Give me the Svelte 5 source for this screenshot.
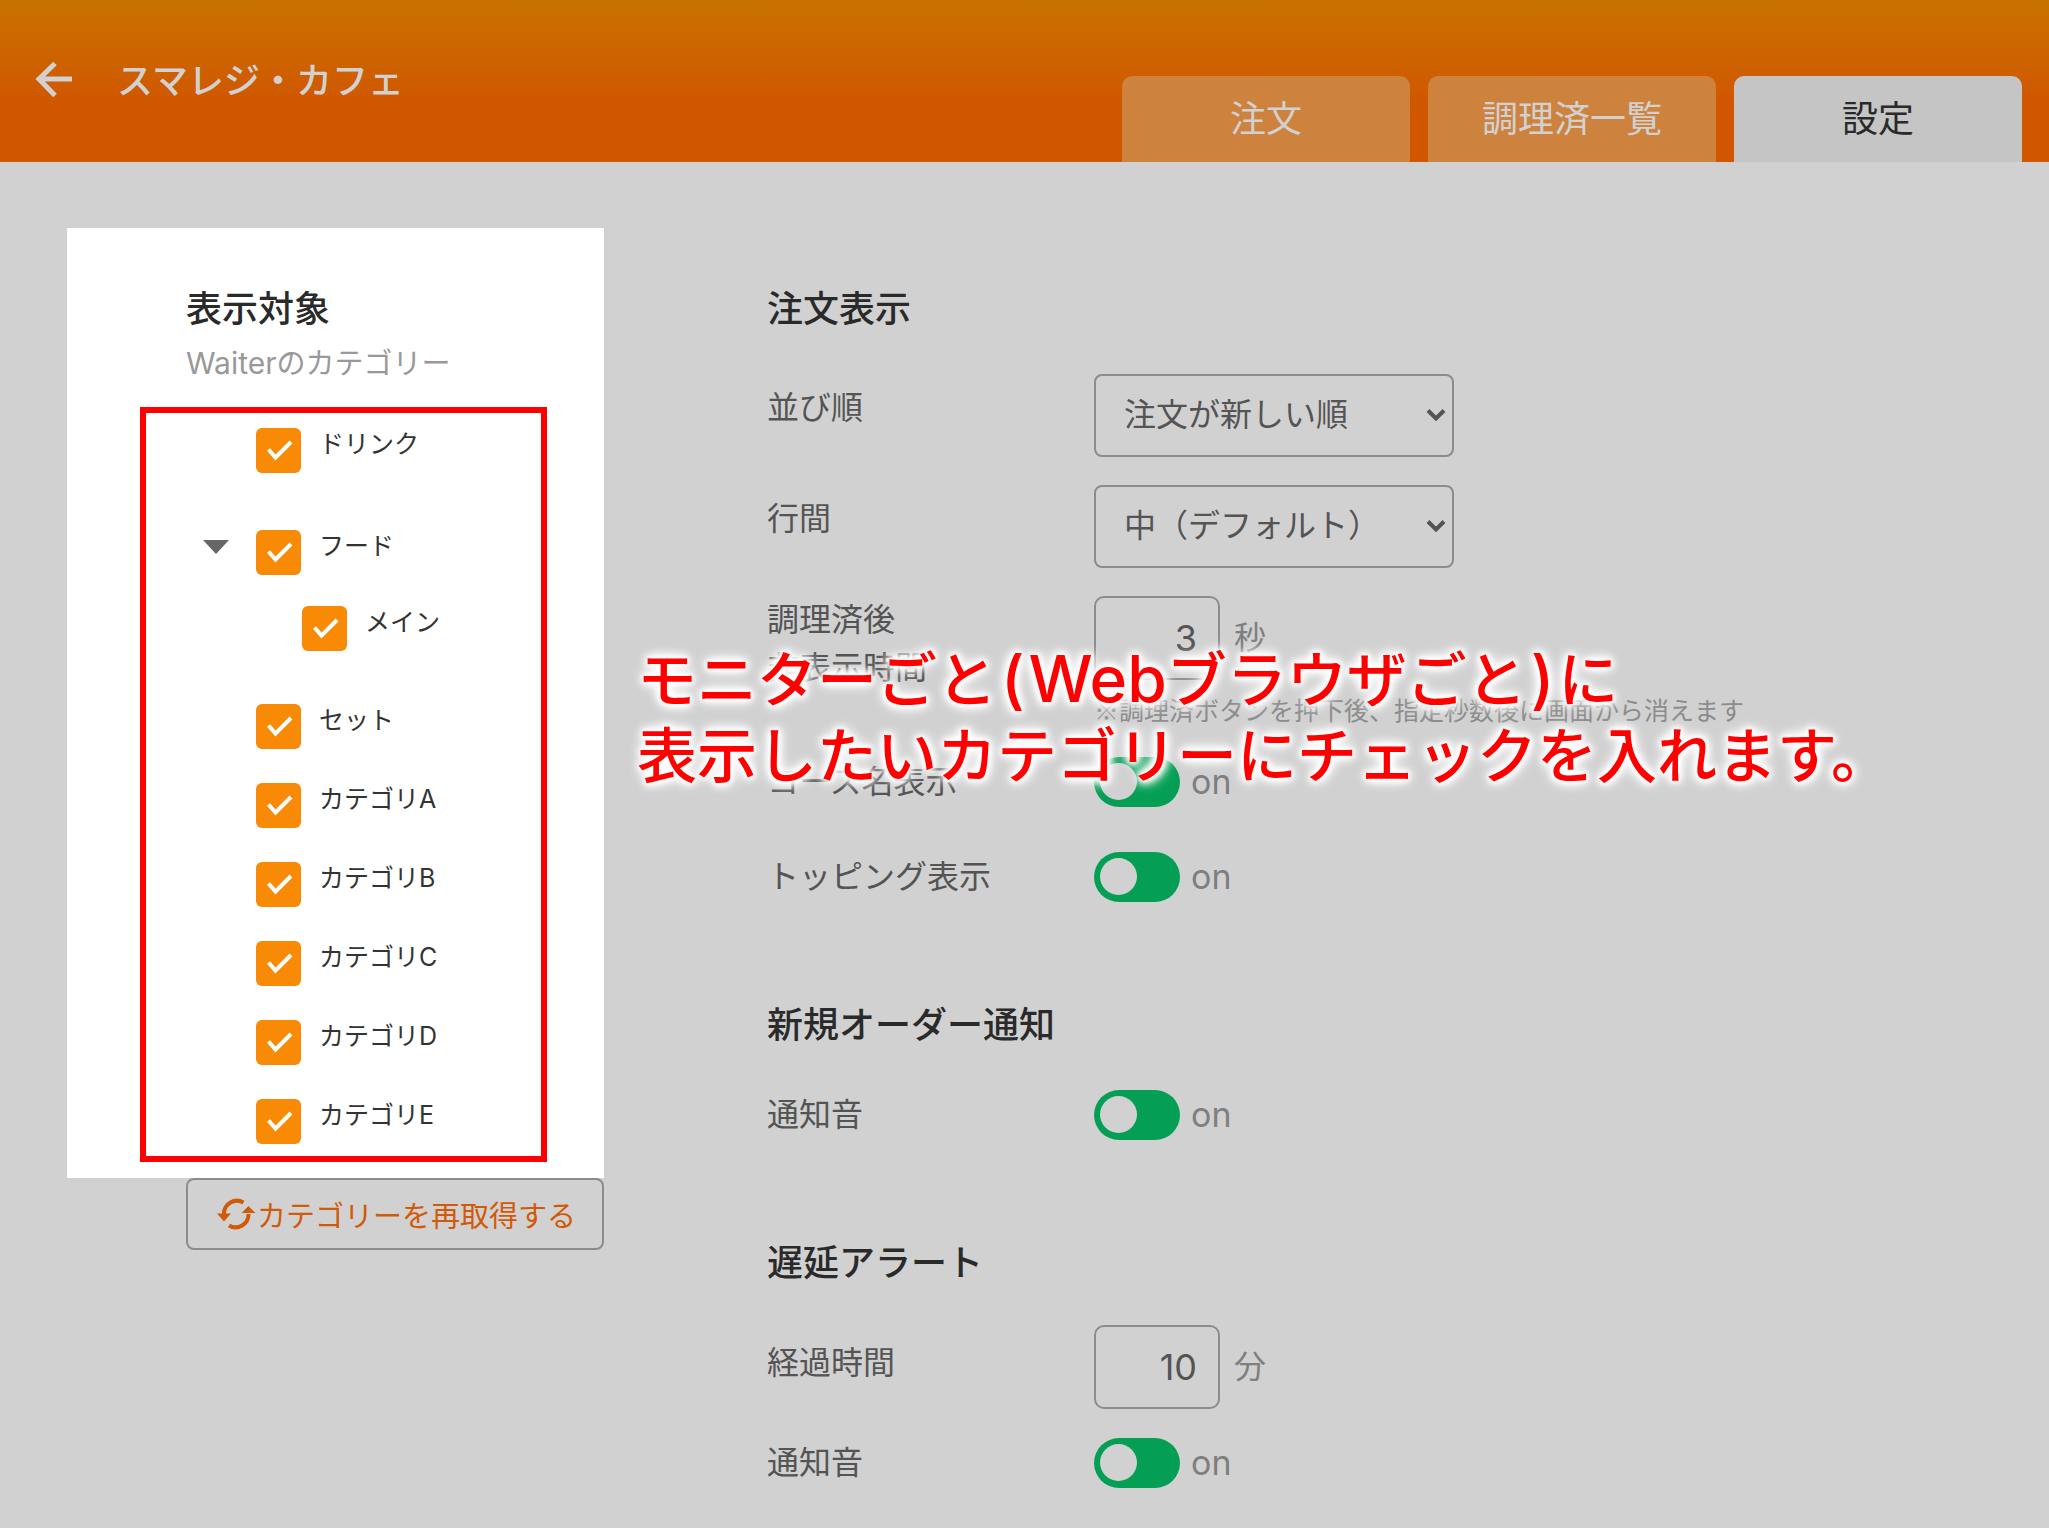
<script>
  const tabs = [
    { label: '注文', active: false },
    { label: '調理済一覧', active: false },
    { label: '設定', active: true },
  ];

  let categories = $state([
    { id: 'drink', label: 'ドリンク', checked: true, spaced: true },
    {
      id: 'food',
      label: 'フード',
      checked: true,
      spaced: true,
      children: [{ id: 'main', label: 'メイン', checked: true }],
    },
    { id: 'set', label: 'セット', checked: true },
    { id: 'a', label: 'カテゴリA', checked: true },
    { id: 'b', label: 'カテゴリB', checked: true },
    { id: 'c', label: 'カテゴリC', checked: true },
    { id: 'd', label: 'カテゴリD', checked: true },
    { id: 'e', label: 'カテゴリE', checked: true },
  ]);

  let course = $state(true);
  let topping = $state(true);
  let orderSound = $state(true);
  let delaySound = $state(true);
</script>

{#snippet checkbox(item)}
  <label class="check">
    <input type="checkbox" bind:checked={item.checked} />
    <svg class="box" viewBox="0 0 45 45" aria-hidden="true">
      <rect width="45" height="45" rx="6" />
      {#if item.checked}<path d="M12.5 21.5 L19.5 29.5 L35 14" />{/if}
    </svg>
    <span>{item.label}</span>
  </label>
{/snippet}

{#snippet chevron()}
  <svg class="chevron" viewBox="0 0 20 14" aria-hidden="true"><path d="M2 2.5 L10 10.5 L18 2.5" /></svg>
{/snippet}

<div class="page">
  <header>
    <button class="back" aria-label="戻る">
      <svg viewBox="0 0 40 40" aria-hidden="true"><path d="M38 18 H5 M21 2.500 L5 18 L21 34.500" /></svg>
    </button>
    <h1>スマレジ・カフェ</h1>
    <nav>
      {#each tabs as tab}
        <a href="#top" class:active={tab.active}>{tab.label}</a>
      {/each}
    </nav>
  </header>

  <main>
    <aside>
      <section class="card">
        <h2>表示対象</h2>
        <p class="sub"><span class="latin">Waiter</span>のカテゴリー</p>
        <ul class="tree">
          {#each categories as cat (cat.id)}
            <li class:spaced={cat.spaced}>
              <div class="row">
                {#if cat.children}
                  <button class="fold" aria-label="折りたたむ">
                    <svg viewBox="0 0 26 14" aria-hidden="true"><path d="M0 0 H26 L13 14 Z" /></svg>
                  </button>
                {/if}
                {@render checkbox(cat)}
              </div>
              {#if cat.children}
                <ul class="sublist">
                  {#each cat.children as child (child.id)}
                    <li class="row">{@render checkbox(child)}</li>
                  {/each}
                </ul>
              {/if}
            </li>
          {/each}
        </ul>
      </section>
      <button class="reload">
        <svg viewBox="0 0 38 32" aria-hidden="true">
          <path class="arc" d="M26.500 4.500 A13 13 0 0 0 7 16 M12 27.500 A13 13 0 0 0 31.500 16" />
          <path d="M0 15.500 H14 L7 23.500 Z M24.500 15 H38.500 L31.500 8 Z" />
        </svg>
        <span>カテゴリーを再取得する</span>
      </button>
    </aside>

    <div class="settings">
      <section>
        <h2>注文表示</h2>
        <div class="field first">
          <label for="order">並び順</label>
          <div class="select">
            <select id="order"><option>注文が新しい順</option></select>
            {@render chevron()}
          </div>
        </div>
        <div class="field second">
          <label for="spacing">行間</label>
          <div class="select">
            <select id="spacing"><option>中（デフォルト）</option></select>
            {@render chevron()}
          </div>
        </div>
        <div class="field third">
          <label for="seconds">調理済後<br />非表示時間</label>
          <div>
            <div class="amount"><input id="seconds" type="text" inputmode="numeric" value="3" /><span>秒</span></div>
            <p class="note">※調理済ボタンを押下後、指定秒数後に画面から消えます</p>
          </div>
        </div>
        <div class="field switch">
          <label for="course">コース名表示</label>
          <div class="toggle"><input id="course" type="checkbox" role="switch" bind:checked={course} /><span>{course ? 'on' : 'off'}</span></div>
        </div>
        <div class="field switch">
          <label for="topping">トッピング表示</label>
          <div class="toggle"><input id="topping" type="checkbox" role="switch" bind:checked={topping} /><span>{topping ? 'on' : 'off'}</span></div>
        </div>
      </section>

      <section>
        <h2>新規オーダー通知</h2>
        <div class="field switch">
          <label for="order-sound">通知音</label>
          <div class="toggle"><input id="order-sound" type="checkbox" role="switch" bind:checked={orderSound} /><span>{orderSound ? 'on' : 'off'}</span></div>
        </div>
      </section>

      <section>
        <h2>遅延アラート</h2>
        <div class="field delay">
          <label for="minutes">経過時間</label>
          <div class="amount"><input id="minutes" type="text" inputmode="numeric" value="10" /><span>分</span></div>
        </div>
        <div class="field switch">
          <label for="delay-sound">通知音</label>
          <div class="toggle"><input id="delay-sound" type="checkbox" role="switch" bind:checked={delaySound} /><span>{delaySound ? 'on' : 'off'}</span></div>
        </div>
      </section>
    </div>
  </main>

  <p class="callout">モニターごと<span class="paren">(</span><span class="latin">Web</span>ブラウザごと<span class="paren">)</span>に<br />表示したいカテゴリーにチェックを入れます。</p>
</div>

<style>
  :global(body) {
    background: #d1d1d1;
  }

  .page {
    position: relative;
    min-height: 100vh;
    box-sizing: border-box;
    font-family: Inter, 'Noto Sans CJK JP', sans-serif;
    color: #545454;
  }

  .page :is(button, input, select) {
    font-family: inherit;
    margin: 0;
    padding: 0;
    background: none;
    border: 0;
    color: inherit;
    box-sizing: border-box;
  }

  h1,
  h2,
  p,
  ul {
    margin: 0;
    padding: 0;
    list-style: none;
  }

  svg {
    display: block;
    fill: none;
  }

  header {
    height: 162px;
    display: flex;
    align-items: center;
    padding: 0 27px 0 34px;
    box-sizing: border-box;
    background: linear-gradient(#c87200, #d15600 66%, #d15600);
  }

  .back svg {
    width: 40px;
    height: 40px;
    stroke: #d1d1d1;
    stroke-width: 5;
  }

  h1 {
    margin-left: 43px;
    font-size: 36px;
    line-height: 54px;
    font-weight: 500;
    color: #d1d1d1;
  }

  nav {
    margin-left: auto;
    align-self: flex-end;
    display: flex;
    gap: 18px;
  }

  nav a {
    width: 288px;
    height: 86px;
    border-radius: 10px 10px 0 0;
    background: #cd823e;
    color: #d1d1d1;
    font-size: 36px;
    line-height: 86px;
    text-align: center;
    text-decoration: none;
  }

  nav a.active {
    background: #c5c5c5;
    color: #2a2a2a;
  }

  main {
    display: flex;
    gap: 163px;
    padding: 66px 67px 0;
  }

  aside {
    width: 537px;
    flex: none;
  }

  .card {
    background: #fff;
    padding: 54px 57px 16px 73px;
  }

  h2 {
    font-size: 36px;
    line-height: 54px;
    font-weight: 500;
    color: #2a2a2a;
  }

  .card h2,
  .sub {
    margin-left: 46px;
  }

  .sub {
    font-size: 29px;
    line-height: 54px;
    color: #999;
  }

  .sub .latin {
    font-size: 30px;
  }

  .tree {
    margin-top: 16px;
    border: 6px solid #f00;
    padding: 15px 0 12px;
  }

  .row {
    display: flex;
    position: relative;
    height: 79px;
    padding-left: 110px;
  }

  .tree > li:last-child .row {
    height: 45px;
  }

  .spaced {
    margin-bottom: 23px;
  }

  .sublist {
    margin-top: -3px;
  }

  .sublist .row {
    height: 75px;
    padding-left: 156px;
  }

  .fold {
    position: absolute;
    left: 57px;
    top: 10px;
  }

  .fold svg {
    width: 26px;
    height: 14px;
    fill: #666;
  }

  .check {
    display: flex;
    gap: 18px;
    height: 45px;
    font-size: 25px;
    line-height: 32px;
    color: #333;
    cursor: pointer;
  }

  .check input {
    position: absolute;
    opacity: 0;
    width: 45px;
    height: 45px;
  }

  .box {
    width: 45px;
    height: 45px;
    fill: #f88a05;
  }

  .box path {
    fill: none;
    stroke: #fff;
    stroke-width: 4;
  }

  .page .reload {
    display: flex;
    align-items: center;
    gap: 2px;
    width: 418px;
    height: 72px;
    margin-left: 119px;
    padding-left: 29px;
    border: 2px solid #8c8c8c;
    border-radius: 8px;
    font-size: 29px;
    color: #d15a0a;
  }

  .reload svg {
    width: 38px;
    height: 32px;
    fill: #d15a0a;
    overflow: visible;
  }

  .reload .arc {
    fill: none;
    stroke: #d15a0a;
    stroke-width: 4;
  }

  .reload span {
    white-space: nowrap;
  }

  .settings {
    flex: 1;
    padding-top: 54px;
  }

  .settings h2 {
    margin-bottom: 15px;
  }

  .settings section + section {
    margin-top: 74px;
  }

  .field {
    display: grid;
    grid-template-columns: 327px 1fr;
    font-size: 32px;
    line-height: 48px;
  }

  .first {
    margin-top: 38px;
    height: 111px;
  }

  .first label,
  .second label {
    padding-top: 10px;
  }

  .second {
    height: 111px;
  }

  .select {
    position: relative;
    width: 360px;
    height: 83px;
  }

  .page select {
    appearance: none;
    width: 100%;
    height: 100%;
    padding: 0 40px 2px 28px;
    border: 2px solid #8c8c8c;
    border-radius: 8px;
    font-size: 32px;
  }

  .chevron {
    position: absolute;
    right: 8px;
    top: 34px;
    width: 20px;
    height: 14px;
    stroke: #545454;
    stroke-width: 4;
    pointer-events: none;
  }

  .amount {
    display: flex;
    align-items: center;
    gap: 14px;
    color: #7f7f7f;
  }

  .page .amount input {
    width: 126px;
    height: 84px;
    padding-right: 21px;
    border: 2px solid #8c8c8c;
    border-radius: 10px;
    font-size: 36px;
    text-align: right;
    color: #545454;
  }

  .note {
    padding-top: 5px;
    font-family: 'Noto Sans CJK JP', sans-serif;
    font-size: 25px;
    line-height: 48px;
    color: #8c8c8c;
  }

  .third {
    height: 138px;
  }

  .switch {
    min-height: 95px;
    align-items: center;
  }

  .toggle {
    display: flex;
    align-items: center;
    gap: 11px;
    font-size: 34px;
    color: #7f7f7f;
  }

  .page .toggle input {
    appearance: none;
    width: 86px;
    height: 50px;
    padding: 6px;
    border-radius: 25px;
    background: #049f54;
    cursor: pointer;
  }

  .toggle input::before {
    content: '';
    display: block;
    width: 37px;
    height: 37px;
    border-radius: 50%;
    background: #d1d1d1;
  }

  .delay {
    margin-top: 35px;
    height: 90px;
    align-items: start;
  }

  .delay label {
    padding-top: 14px;
  }

  /* Annotation laid over the settings form */
  .callout {
    position: absolute;
    left: 637px;
    top: 641px;
    font-size: 60px;
    line-height: 76px;
    font-weight: 500;
    color: #f00;
    white-space: nowrap;
    pointer-events: none;
    text-shadow:
      0 0 4px #fff,
      0 0 6px #fff,
      0 0 8px #fff,
      0 0 10px #fff,
      0 0 12px #fff,
      0 0 14px #fff,
      0 0 16px #fff;
  }

  .callout .latin,
  .paren {
    font-size: 64px;
  }

  .paren {
    padding: 0 4px;
  }
</style>
